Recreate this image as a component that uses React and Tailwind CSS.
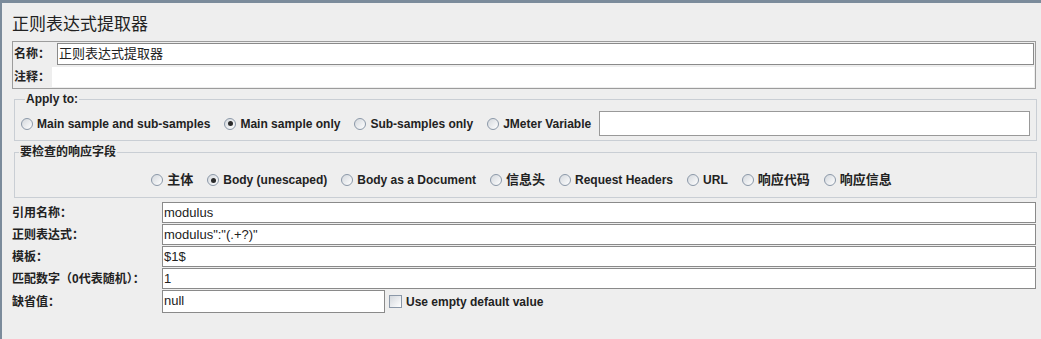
import React from 'react';

const font = { fontFamily: '"Liberation Sans", "Noto Sans CJK SC", sans-serif' };

const Radio = ({ label, checked, cjk }) => (
  <label className="flex items-center shrink-0">
    <span className="w-[12px] h-[12px] rounded-full border border-[#8b98a8] bg-gradient-to-br from-[#d4d8dd] to-white flex items-center justify-center">
      {checked && <span className="w-[5px] h-[5px] rounded-full bg-[#2b2b2b]" />}
    </span>
    <span className={`ml-[4px] font-bold text-[#222] leading-[16px] ${cjk ? 'text-[13px]' : 'text-[12px]'}`}>{label}</span>
  </label>
);

const Field = ({ value, className = '' }) => (
  <div className={`h-[21px] bg-white border border-[#8a8a8a] pl-[1px] text-[13px] leading-[19px] text-[#222] ${className}`}>
    {value}
  </div>
);

const rows = [
  { label: '引用名称：', value: 'modulus' },
  { label: '正则表达式：', value: 'modulus":"(.+?)"' },
  { label: '模板：', value: '$1$' },
  { label: '匹配数字（0代表随机）：', value: '1' },
];

export default function App() {
  return (
    <div
      style={font}
      className="w-[1041px] h-[339px] overflow-hidden bg-[#eeeeee] border-t-[3px] border-l-[2px] border-[#7b8b9b] pl-[10px] pr-[4px] pt-[10px]"
    >
      <h1 className="text-[17px] leading-[24px] text-[#222] font-normal">正则表达式提取器</h1>

      {/* name / comment */}
      <div className="mt-[4px] mr-[1px] border border-[#9c9c9c] pl-[1px] pr-[1px] pt-[1px] h-[48px]">
        <div className="flex items-center">
          <span className="w-[43px] text-[12px] font-bold text-[#222]">名称：</span>
          <Field value="正则表达式提取器" className="flex-1 h-[22px]" />
        </div>
        <div className="flex items-center mt-[2px]">
          <span className="w-[38px] text-[12px] font-bold text-[#222]">注释：</span>
          <div className="flex-1 h-[20px] bg-white" />
        </div>
      </div>

      {/* apply to */}
      <fieldset className="mt-[3px] ml-[2px] border border-[#c9ced4] pl-[6px] pr-[6px] pt-[5px] pb-[4px]">
        <legend className="ml-[4px] px-[1px] text-[12px] font-bold leading-[14px] text-[#222]">Apply to:</legend>
        <div className="flex items-center h-[25px]">
          <div className="flex items-center gap-[14px]">
            <Radio label="Main sample and sub-samples" />
            <Radio label="Main sample only" checked />
            <Radio label="Sub-samples only" />
            <Radio label="JMeter Variable" />
          </div>
          <div className="flex-1 ml-[8px] h-[25px] bg-white border border-[#999]" />
        </div>
      </fieldset>

      {/* response field */}
      <fieldset className="mt-[4px] ml-[2px] border border-[#c9ced4] pt-[13px] pb-[9px]">
        <legend className="ml-[4px] px-[1px] text-[12px] font-bold leading-[14px] text-[#222]">要检查的响应字段</legend>
        <div className="flex items-center justify-center gap-[14px] h-[16px] pr-[8px]">
          <Radio label="主体" cjk />
          <Radio label="Body (unescaped)" checked />
          <Radio label="Body as a Document" />
          <Radio label="信息头" cjk />
          <Radio label="Request Headers" />
          <Radio label="URL" />
          <Radio label="响应代码" cjk />
          <Radio label="响应信息" cjk />
        </div>
      </fieldset>

      {/* rows */}
      <div className="mt-[4px] mr-[1px] flex flex-col gap-[1px]">
        {rows.map((r) => (
          <div key={r.label} className="flex items-center">
            <span className="w-[150px] shrink-0 text-[12px] font-bold text-[#222]">{r.label}</span>
            <Field value={r.value} className="flex-1" />
          </div>
        ))}
        <div className="flex items-center">
          <span className="w-[150px] shrink-0 text-[12px] font-bold text-[#222]">缺省值：</span>
          <Field value="null" className="w-[223px] h-[23px]" />
          <span className="ml-[4px] w-[13px] h-[13px] border border-[#8b98a8] bg-gradient-to-br from-[#d4d8dd] to-white" />
          <span className="ml-[4px] text-[12px] font-bold text-[#222]">Use empty default value</span>
        </div>
      </div>
    </div>
  );
}
